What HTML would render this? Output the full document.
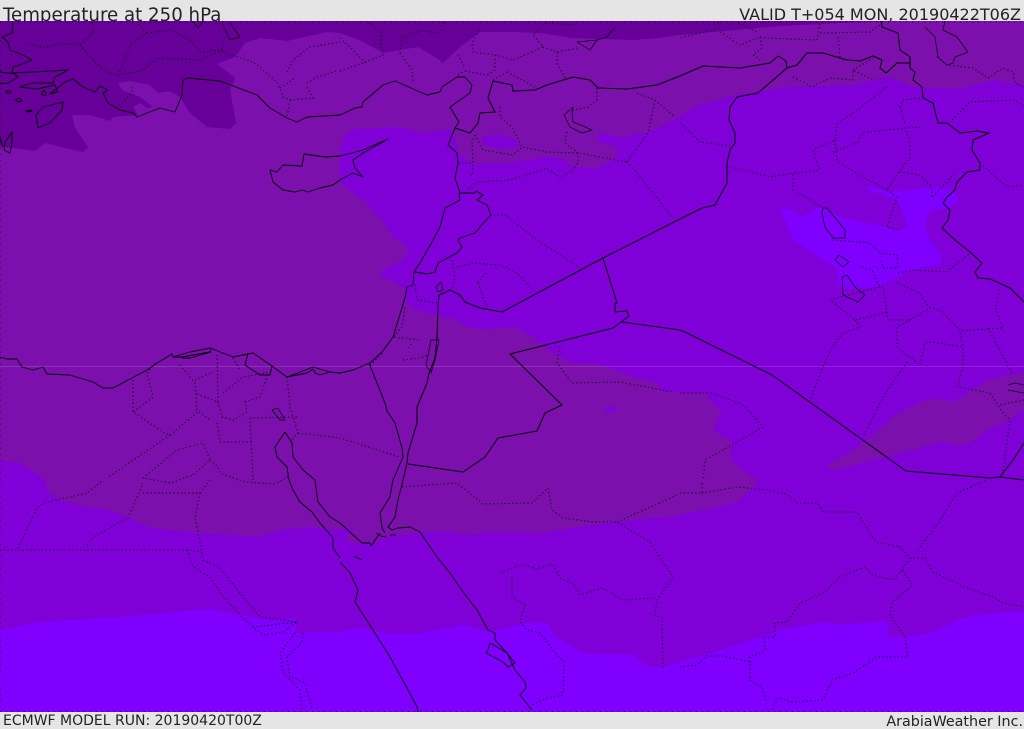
<!DOCTYPE html>
<html><head><meta charset="utf-8"><title>Temperature at 250 hPa</title>
<style>
html,body{margin:0;padding:0;background:#e5e5e5}
#p{position:relative;width:1024px;height:729px;overflow:hidden;background:#e5e5e5;font-family:"DejaVu Sans","Liberation Sans",sans-serif;color:#222}
.t{position:absolute;white-space:nowrap;line-height:1}
svg{position:absolute;left:0;top:0}
</style></head><body><div id="p">
<div class="t" style="left:3px;top:7px;font-size:18.2px">Temperature at 250 hPa</div>
<div class="t" style="right:3px;top:7px;font-size:16px">VALID T+054 MON, 20190422T06Z</div>
<div class="t" style="left:3px;top:714px;font-size:14px">ECMWF MODEL RUN: 20190420T00Z</div>
<div class="t" style="right:1px;top:715px;font-size:14.3px">ArabiaWeather Inc.</div>
<svg width="1024" height="729" viewBox="0 0 1024 729">
<defs><clipPath id="c"><rect x="0" y="21" width="1024" height="691"/></clipPath></defs>
<g clip-path="url(#c)">
<rect x="0" y="21" width="1024" height="691" fill="#8000d8"/>
<g stroke-linejoin="round">
<polygon fill="#7f00ff" points="0,630 40,622 120,617 210,609 240,615 270,620 297,618 296,628 295,633 340,632 358,627 383,633 415,634 450,628 465,625 480,630 495,631 525,623 548,623 553,635 582,653 633,655 648,667 665,667 680,662 705,655 743,643 780,630 825,622 843,625 883,621 888,625 888,637 905,637 930,633 963,618 985,614 1024,611 1024,712 0,712"/>
<polygon fill="#7f00ff" points="782,208 790,210 802,217 817,208 824,208 843,218 867,223 900,231 907,227 903,213 897,200 885,195 870,191 866,188 872,187 890,192 910,190 933,187 953,190 959,200 950,208 930,210 925,227 930,240 942,257 940,265 920,268 907,272 893,280 877,287 850,288 837,285 838,270 820,258 793,240 788,227 782,213"/>
<polygon fill="#7b10ad" points="0,460 20,463 45,480 48,492 60,500 85,507 110,510 130,518 150,528 200,533 260,537 280,530 305,527 340,530 353,527 353,532 347,535 348,542 360,543 373,543 387,537 420,533 447,531 470,535 490,532 540,533 607,523 680,515 713,508 737,502 755,485 757,480 730,460 732,442 713,430 721,412 710,400 707,393 680,393 663,392 657,383 627,375 603,365 573,363 553,353 533,337 515,327 487,329 467,327 455,319 437,316 412,308 405,298 405,288 380,275 382,270 403,260 409,250 400,240 395,240 390,233 382,220 367,203 347,188 340,180 340,150 345,135 353,129 400,127 423,133 450,129 455,140 460,155 473,163 507,163 547,157 563,159 573,167 597,168 617,157 617,147 603,143 596,138 600,133 620,137 647,133 680,117 693,107 737,95 787,87 853,85 887,77 897,80 913,87 963,89 993,80 1024,85 1024,21 0,21"/>
<polygon fill="#8000d8" points="482,137 497,134 517,140 520,147 500,149 483,145"/>
<polygon fill="#8000d8" points="605,408 611,406 617,409 617,413 608,413 604,411"/>
<polygon fill="#7b10ad" points="827,465 843,457 867,440 893,417 920,402 937,398 953,402 970,392 987,380 1024,372 1024,410 1007,422 990,428 970,443 957,445 940,442 913,450 880,458 847,467 830,470"/>
<polygon fill="#660099" points="0,147 13,148 35,151 45,143 65,148 83,152 88,147 75,128 72,115 90,115 110,121 113,117 138,115 133,107 140,103 147,108 153,107 140,97 122,90 118,83 130,81 150,85 158,93 170,91 180,97 190,113 207,127 230,129 236,123 230,90 235,78 217,64 235,57 245,43 260,38 287,41 327,32 340,33 360,40 383,53 400,50 418,47 440,60 442,64 460,47 480,32 513,32 540,33 573,38 633,40 657,38 680,35 713,32 780,26 840,23 900,21 0,21"/>
</g>
<rect x="0" y="366" width="1024" height="1" fill="#fff" opacity=".14"/>
<g fill="none" stroke="#000" stroke-width="1" stroke-dasharray="1.2 2.6">
<path d="M0,22H1024M0,711.5H1024M.5,22V712" stroke-dasharray="1 5" stroke-width=".7"/>
<path d="M25,43L43,48L63,43L80,45L93,33L92,22M80,45L93,60L107,72L118,75L132,43L147,33L137,23M147,33L170,30L190,40L200,52L222,50L223,38M118,75L143,70L157,58L200,60L222,50M132,87L132,93L117,108M222,52L253,62L277,82L283,97L290,100L287,117M287,72L293,60L310,47L340,42M280,88L295,78M307,83L317,77L337,71M290,100L313,98L307,87"/>
<path d="M340,71L363,63L383,55L380,43L382,33L368,22M400,53L402,38L420,31L440,33L443,22M400,53L412,70L413,83M340,38L353,50L365,63M480,27L472,43L473,52L495,55L513,60L543,47L533,35L545,23L573,25M495,55L495,70L487,75L465,71L457,75M458,55L465,68M507,72L537,88M493,80L507,72M543,47L557,52L577,48M557,52L557,63L565,78M597,88L597,100L588,107L573,110M567,132L565,143L578,153L578,163L573,170L560,178L547,168L510,180L477,182L467,190M500,107L500,117L512,127L522,147L547,152L578,153L627,162M627,162L648,133L655,100L637,93M655,100L675,117M627,162L637,173L673,218M475,135L472,143L473,163L473,175L468,175M475,135L483,150L513,155L522,147M458,163L473,163M490,215L505,215L537,240L557,253L580,268"/>
<path d="M457,267L473,263L500,265L517,273L533,290M478,283L487,272M478,283L483,297L488,308M452,260L455,277L452,288M415,285L417,300L437,303M405,308L402,327L393,337L420,340M403,360L420,358L428,355M408,348L412,343M370,365L383,353M560,347L557,363L572,383L620,382L673,392M343,439L400,457"/>
<path d="M680,393L712,393L743,405L763,427L732,445L705,460L703,480M680,493L702,493L702,483M702,493L737,487L767,490L787,494L797,503L818,503L823,512L857,512L872,537L877,542L900,547L910,558L925,558L933,572L960,585L993,597L1003,603L1024,607M918,550L940,520L957,493L987,480M910,558L902,570L913,585L892,602L890,615L905,637L908,657L877,657L853,673L832,680L823,700L793,702L778,698L772,710M902,570L893,580L873,575L865,567L840,577L823,593L800,603L787,622L775,623L775,637L763,637L766,650L750,657L750,680L762,687L767,703M680,667L697,665L707,656L723,656L750,662"/>
<path d="M402,487L427,485L457,483L483,504L532,503L548,488L552,510L563,518L593,522L617,522L650,542L657,553L673,577L657,600L655,615L662,618L663,668M617,522L677,495M500,573L523,564L537,569L553,564L560,578L573,583L580,595L602,588L623,600L655,598M512,577L512,597L525,605L520,622L527,630L540,633L553,650L564,662L563,695L547,698L532,705"/>
<path d="M0,550L187,550L202,552M18,548L37,508L43,503L87,493L103,480M87,545L93,537L128,518L143,483M143,493L200,493L210,480M200,493L195,518L202,550L202,557M187,550L193,567L210,577L222,595L240,615L253,627L263,635L283,632L297,622L270,625L253,627M203,560L220,568L240,593L260,617L297,622M303,633L302,643L287,657L290,677L305,683L312,708M295,633L280,653L283,673L300,690L302,710"/>
<path d="M133,380L133,412L163,432L170,435L198,412M155,363L147,373L153,397L133,412M170,435L107,478M180,365L195,383L197,410L210,420M197,394L218,402L217,353M218,402L222,417L233,420L247,412L245,402L260,397L267,377M223,393L243,377L270,372M195,380L213,372M233,358L240,370M287,377L290,407L298,433L292,440M298,433L340,438M250,418L297,417M250,418L253,480M217,423L220,442L252,442M143,478L177,450L203,443L210,460L193,475L170,483L143,478M210,460L218,467L220,473L245,482L275,484L289,476"/>
<path d="M718,22L720,28L680,38M720,32L740,45L760,37L767,38L817,40L820,23M820,33L870,32L880,25M838,37L840,57M760,37L762,48L753,55L760,60M738,23L757,32M793,77L812,87L830,78L853,80L853,70L873,80M853,70L873,58M887,87L853,113L838,123L835,140L813,150L820,170L793,173L793,190L813,202L823,208M727,166L770,177L793,173M680,123L700,142L730,146M835,140L837,160L840,163L860,175L887,190L900,170L910,157L910,142L905,128L920,127M833,152L857,143L862,133L905,128M900,107L903,100L922,98M900,107L905,123M952,120L970,102L1013,100L1024,105M980,163L1007,187L1024,185M887,190L897,197L887,227L897,230M900,172L920,175L932,187L932,198L957,170M937,57L947,65L973,68L988,78L1003,68L1013,72L1015,83L1024,87"/>
<path d="M833,240L870,243L880,253L897,255L898,268L883,268L881,260M862,267L872,270L877,283L883,288L887,312L855,320L830,300L840,297L880,287M855,320L860,327L843,333L832,347L823,367L810,400M887,312L888,320L910,320L930,308L940,310L960,330L963,347L963,363L958,387L990,393L1003,413L1010,420L1005,457L1002,477M910,320L897,327L897,347L920,365L925,343L933,342L963,347M907,362L883,397L863,437M897,283L918,292L930,308M898,273L913,270L947,272L970,253M1000,290L995,307L1003,328L960,331M988,328L1013,375M1024,400L1000,405"/>
</g>
<g fill="none" stroke="#000" stroke-width=".9" stroke-linejoin="round">
<path d="M13,23L12,33L2,37L8,42L10,50L18,53L23,55L32,60L25,63L13,67L12,73L33,72L68,70L55,77L53,83L32,83L20,87L37,89L55,85L58,92L50,94L65,82L73,79L83,87L95,92L100,86L108,90L103,93L108,103L120,110L133,113L137,117L160,108L175,112L182,95L183,80L188,78L220,81L257,95L270,108L287,118L297,122L307,117L340,115L355,108L362,107L363,102L383,85L395,81L427,95L440,92L442,87L457,77L465,77L472,85L470,93L450,107L459,122L455,128L448,145L457,153L458,163L455,178L460,193"/>
<path stroke-width="1" d="M455,128L470,133L478,123L480,113L495,112L488,98L493,81L512,85L513,91L535,90L547,85L573,77L590,80L598,88L627,89L657,85L680,76L703,66L740,68L770,63L778,56L786,61L787,68L797,65L807,53L823,53L847,60L860,61L873,56L882,60L880,68L886,73L897,63L910,63M881,21L882,27L898,33L900,50L910,57L910,68L915,72L913,80L922,87L923,98L933,103L938,123L947,123L960,133L977,131L989,133L973,140L972,150L980,163L980,170L967,172L957,182L955,190L947,197L943,203L950,210L948,220L942,228L955,240L970,252L982,263L975,272L978,278L990,279L1010,288L1024,302"/>
<path stroke-width="1" d="M787,68L758,93L737,97L730,107L729,120L735,133L735,143L730,150L727,163L727,183L715,205L702,208L680,219L603,258L502,312L480,308L465,302L460,295L450,290L439,295L438,307L437,337L435,358L429,373L427,383L417,407L417,423L408,453L407,463M603,258L617,303L615,303L615,312L627,311L629,316L613,328L510,354L562,405L545,413L537,431L498,438L485,457L463,472L408,464M622,322L680,330L687,333L772,375L906,471L990,478L1000,477L1024,480M1000,477L1013,460L1024,443"/>
<path d="M459,193L475,193L476,191L483,195L477,200L487,205L491,215L480,227L475,233L460,238L458,240L462,247L457,253L438,263L435,272L427,274L415,272M459,193L460,200L445,208L440,227L433,240L420,263L414,272L413,285L407,287L405,298L393,337L382,352L370,363L353,370L340,373L330,372L313,367L300,372L287,377L272,366L253,353L233,357L210,348L190,352L173,357L172,354L157,363L147,370L113,388L103,388L93,382L70,375L47,374L43,367L33,370L22,367L17,359L7,359L0,357"/>
<path d="M173,357L182,357L210,352L211,349M211,352L190,358L182,358M248,353L245,365L260,375L270,375L272,366M287,377L307,373L313,369L315,373L320,375L330,372"/>
<path d="M369,363L385,403L387,411L395,423L402,448L403,457L393,480L390,497L380,513L382,528L385,533M407,463L403,480L398,500L395,517L388,527L392,530L398,528L410,527L420,532L437,557L450,573L463,592L477,610L488,630L495,633L495,640L507,653L515,670L525,682L526,688L520,695L532,710"/>
<path d="M340,562L350,573L358,590L355,602L373,630L390,657L407,688L417,707L418,712M285,432L275,447L277,457L287,467L289,480L293,490L300,502L312,512L320,523L333,538L333,548L340,558M285,432L292,443L293,457L303,470L315,480L318,502L330,517L340,523L362,543L370,543L371,546L380,533"/>
<path d="M490,643L488,650L486,653L503,662L508,667L515,663L507,653L497,647Z"/>
<path d="M270,170L273,182L283,190L295,192L302,190L308,192L320,188L333,185L340,180L353,173L363,177L355,168L353,160L363,153L388,139L363,150L340,156L325,157L304,154L302,166L283,165L277,172Z"/>
<path d="M63,102L43,107L36,115L38,128L50,123L62,110ZM12,132L5,142L4,150L10,153L12,143Z"/>
<path stroke-width=".7" d="M823,208L822,213L825,227L833,238L845,238L845,230L837,220L827,208ZM925,27L935,37L938,57L947,65L953,63L955,57L968,52L957,37L943,30L945,21M573,107L564,115L570,127L582,133L592,130L583,126L573,122L572,112ZM615,27L607,37L597,40L577,42L590,50L597,40M222,23L230,40L240,37L230,23M193,21L198,28L203,21M835,260L839,255L849,262L843,267ZM842,277L847,275L855,287L865,295L858,302L843,295ZM1008,385L1015,383L1024,385M1008,390L1024,393M272,410L278,408L285,420L280,420ZM436,287L441,282L443,290L438,292ZM431,340L426,365L431,373L435,360L439,340ZM354,556L362,560M376,533L381,536L386,537M396,535L390,535"/>
<path d="M0,72L8,73L15,74L18,77L8,83L0,84M6,92a2,1 0 1 0 5,0a2,1 0 1 0 -5,0M15,100l4,2l3,-1l-3,-3ZM26,111l5,-1l1,1l-5,1ZM41,94l3,-4l2,3l-1,3ZM50,93h5M0,137L3,147"/>
</g>
</g>
</svg>
</div></body></html>
